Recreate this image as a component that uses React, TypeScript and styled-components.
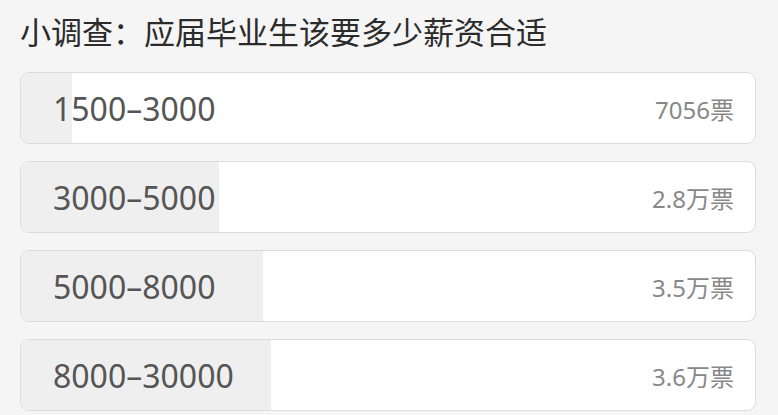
import React from "react";
import styled, { createGlobalStyle } from "styled-components";

const GlobalStyle = createGlobalStyle`
  html, body {
    margin: 0;
    padding: 0;
    background: #f5f5f5;
  }
  body {
    font-family: "Noto Sans", "Noto Sans CJK SC", sans-serif;
  }
`;

interface BarProps {
  percent: number;
}

const options = [
  { label: "1500–3000", votes: "7056票", percent: 7 },
  { label: "3000–5000", votes: "2.8万票", percent: 27 },
  { label: "5000–8000", votes: "3.5万票", percent: 33 },
  { label: "8000–30000", votes: "3.6万票", percent: 34 },
];

const Page = styled.div`
  width: 778px;
  height: 415px;
  box-sizing: border-box;
  padding: 10px 22px 0 20px;
  background: #f5f5f5;
  overflow: hidden;
`;

const Title = styled.h1`
  margin: 0 0 20px;
  font-family: "Noto Sans CJK SC", sans-serif;
  font-size: 31px;
  font-weight: 400;
  line-height: 42px;
  color: #2b2b2b;
  white-space: nowrap;
`;

const List = styled.div`
  display: flex;
  flex-direction: column;
  gap: 17px;
`;

const Option = styled.div`
  position: relative;
  height: 72px;
  box-sizing: border-box;
  border: 1px solid #dcdcdc;
  border-radius: 9px;
  background: #fff;
  overflow: hidden;
  display: flex;
  align-items: center;
  justify-content: space-between;
  padding: 0 21px 0 32px;
`;

const Fill = styled.div<BarProps>`
  position: absolute;
  left: 0;
  top: 0;
  bottom: 0;
  width: ${(p) => p.percent}%;
  background: #efefef;
`;

const Label = styled.span`
  position: relative;
  font-family: "Noto Sans", sans-serif;
  font-size: 32px;
  color: #555;
`;

const Votes = styled.span`
  position: relative;
  font-family: "Noto Sans", "Noto Sans CJK SC", sans-serif;
  font-size: 24px;
  color: #888;
`;

const App = () => (
  <Page>
    <GlobalStyle />
    <Title>小调查：应届毕业生该要多少薪资合适</Title>
    <List>
      {options.map((o) => (
        <Option key={o.label}>
          <Fill percent={o.percent} />
          <Label>{o.label}</Label>
          <Votes>{o.votes}</Votes>
        </Option>
      ))}
    </List>
  </Page>
);

export default App;
